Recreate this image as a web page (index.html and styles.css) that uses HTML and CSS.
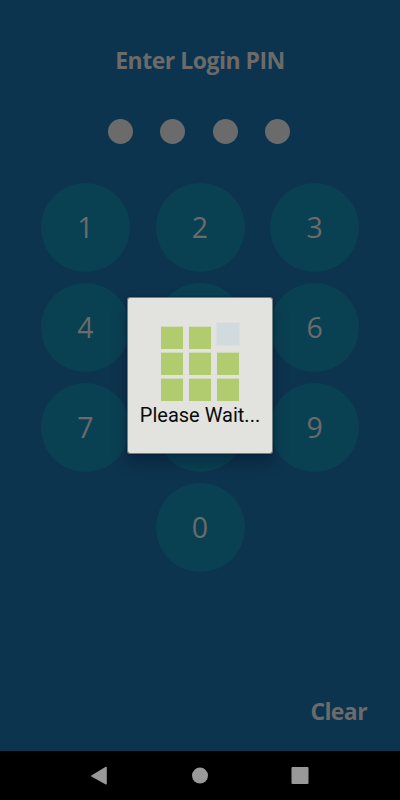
FILE: index.html
```html
<!DOCTYPE html>
<html lang="en">
<head>
    <meta charset="UTF-8">
    <meta name="viewport" content="width=device-width, initial-scale=1.0">
    <title>Enter Login PIN</title>
    <link rel="stylesheet" href="styles.css">
</head>
<body>
    <div class="screen">
        <h1 class="title">Enter Login PIN</h1>
        <div class="dots">
            <span class="dot"></span>
            <span class="dot"></span>
            <span class="dot"></span>
            <span class="dot"></span>
        </div>
        <div class="keypad">
            <div class="key">1</div>
            <div class="key">2</div>
            <div class="key">3</div>
            <div class="key">4</div>
            <div class="key"></div>
            <div class="key">6</div>
            <div class="key">7</div>
            <div class="key"></div>
            <div class="key">9</div>
            <div class="key zero">0</div>
        </div>
        <div class="clear">Clear</div>

        <!-- Loading dialog -->
        <div class="dialog">
            <div class="loader">
                <span class="square"></span>
                <span class="square"></span>
                <span class="square active"></span>
                <span class="square"></span>
                <span class="square"></span>
                <span class="square"></span>
                <span class="square"></span>
                <span class="square"></span>
                <span class="square"></span>
            </div>
            <div class="message">Please Wait...</div>
        </div>
    </div>

    <div class="navbar">
        <svg class="nav-icon" viewBox="0 0 20 20"><path d="M1.4 9.4 15.3 1.1Q16.8.4 16.8 1.6V17.8Q16.8 19 15.3 18.3L1.4 10.4Q.4 9.9 1.4 9.4Z"/></svg>
        <svg class="nav-icon" viewBox="0 0 20 20"><circle cx="10" cy="9.6" r="8"/></svg>
        <svg class="nav-icon" viewBox="0 0 20 20"><rect x="1.5" y="1.1" width="17" height="17" rx="1"/></svg>
    </div>
</body>
</html>
```

FILE: styles.css
```css
* {
    box-sizing: border-box;
}

body {
    margin: 0;
    width: 400px;
    height: 800px;
    display: flex;
    flex-direction: column;
    background: #000;
    font-family: "Open Sans", sans-serif;
    overflow: hidden;
}

.screen {
    position: relative;
    height: 751px;
    display: flex;
    flex-direction: column;
    align-items: center;
    background: #0d344e;
    color: #6b6b6b;
}

.title {
    margin: 45px 0 0;
    font-size: 23px;
    line-height: 30px;
    font-weight: 700;
    letter-spacing: -0.5px;
    white-space: nowrap;
}

.dots {
    display: flex;
    gap: 27.2px;
    margin: 44px 2px 0 0;
}

.dot {
    width: 25px;
    height: 25px;
    border-radius: 50%;
    background: #6b6b6b;
}

.keypad {
    display: grid;
    grid-template-columns: repeat(3, 89px);
    gap: 11px 25.7px;
    margin: 38.6px 0 0;
}

.key {
    height: 89px;
    border-radius: 50%;
    background: #0a4152;
    font-size: 28.5px;
    line-height: 89px;
    text-align: center;
}

.zero {
    grid-column: 2;
}

.clear {
    align-self: flex-end;
    margin: 124px 33px 0 0;
    font-size: 23px;
    line-height: 30px;
    font-weight: 700;
    letter-spacing: -0.6px;
}

.dialog {
    position: absolute;
    top: 297px;
    left: 127px;
    width: 146px;
    height: 157px;
    display: flex;
    flex-direction: column;
    align-items: center;
    padding-top: 29px;
    border: 1px solid rgba(226, 227, 223, 0.5);
    border-radius: 3px;
    background: #e2e3df;
    background-clip: padding-box;
    box-shadow: 0 0 2px rgba(0, 0, 30, 0.6), 0 8px 16px rgba(0, 0, 30, 0.3);
}

.loader {
    display: grid;
    grid-template-columns: repeat(3, 22px);
    gap: 4px 6px;
}

.square {
    height: 22px;
    background: #b0cc6e;
    box-shadow: 0 -1px 0 rgba(176, 204, 110, 0.35);
}

.active {
    transform: translateY(-4px);
    background: #d1dbdd;
    box-shadow: 0 0 0 1px rgba(209, 219, 221, 0.4);
}

.message {
    margin-top: 2px;
    font-family: Roboto, sans-serif;
    font-size: 20px;
    line-height: 24px;
    color: #0a0a0a;
    white-space: nowrap;
}

.navbar {
    height: 49px;
    display: flex;
    justify-content: center;
    align-items: center;
    gap: 80px;
}

.nav-icon {
    width: 20px;
    height: 20px;
    fill: #999;
}
```
